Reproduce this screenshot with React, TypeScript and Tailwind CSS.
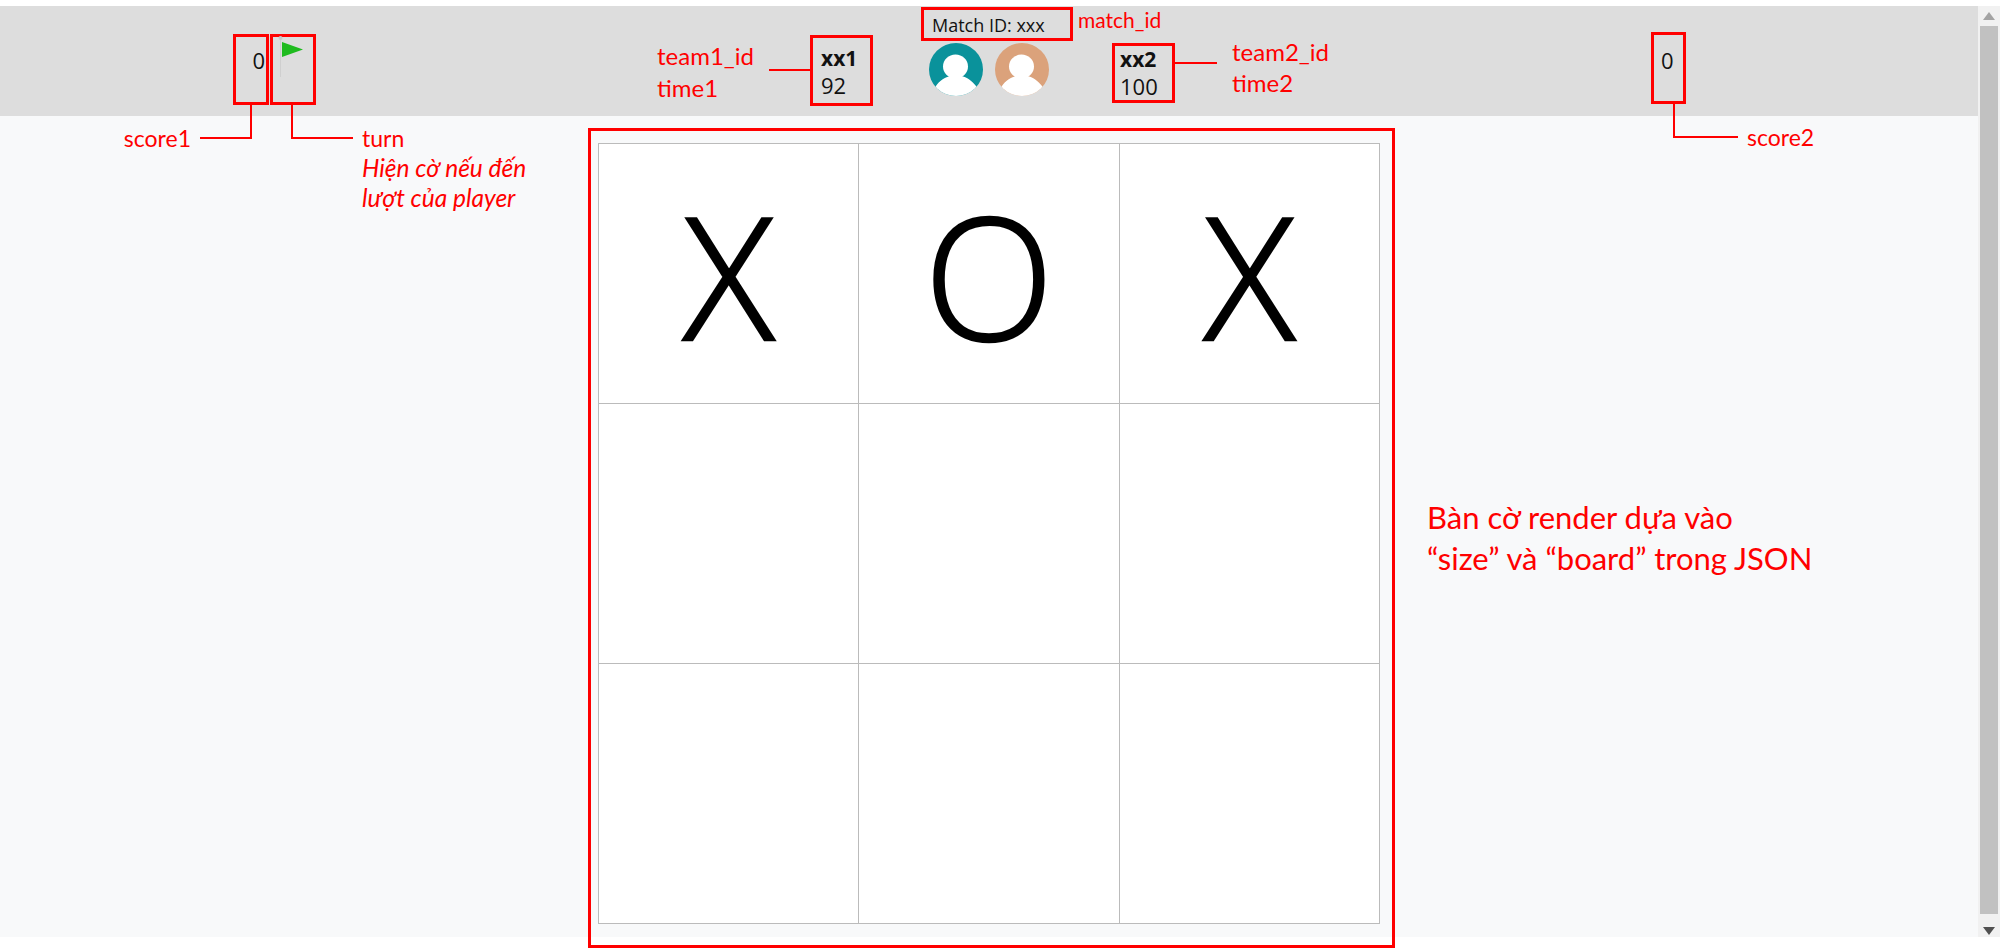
import React from "react";

const cells = ["X", "O", "X", "", "", "", "", "", ""];
const note = "font-['Lato','Open_Sans',sans-serif] text-[#ff0000] whitespace-nowrap";
const box = "border-[3px] border-[#ff0000] shrink-0";

function Avatar({ color, id }: { color: string; id: string }) {
  return (
    <svg viewBox="0 0 54 53" className="w-[54px] h-[53px] block">
      <defs>
        <clipPath id={id}>
          <ellipse cx="27" cy="26.5" rx="27" ry="26.5" />
        </clipPath>
      </defs>
      <ellipse cx="27" cy="26.5" rx="27" ry="26.5" fill={color} />
      <g clipPath={`url(#${id})`} fill="#fff">
        <ellipse cx="26.5" cy="23.5" rx="12.5" ry="12" />
        <path d="M7 43 C10 38 16 34 22 33 L32 33 C38 34 43 38 47 43 L54 53 L0 53 Z" />
      </g>
    </svg>
  );
}

export default function App() {
  return (
    <div className="relative w-full h-[948px] overflow-hidden bg-white pt-[6px] flex items-start font-['Open_Sans',sans-serif] text-[#111]">
      <main className="w-[1978px] h-[931px] bg-[#f8f9fa] shrink-0">
        <header className="h-[110px] bg-[#dddddd] flex items-start">
          {/* score 1 */}
          <div className={`relative ml-[233px] mt-[28px] w-[36px] h-[71px] pt-[8px] pr-[1px] text-right text-[22px] leading-[30px] ${box}`}>
            0
            <div className={`absolute top-[calc(100%+3px)] right-[14px] flex items-start text-[23px] leading-[30px] ${note}`}>
              <span className="mt-[18px] mr-[9px]">score1</span>
              <div className="w-[52px] h-[34px] border-r-2 border-b-2 border-[#ff0000]" />
            </div>
          </div>

          {/* turn */}
          <div className={`relative ml-[1px] mt-[28px] w-[46px] h-[71px] ${box}`}>
            <svg viewBox="0 0 28 44" className="ml-[4px] mt-[-2px] w-[28px] h-[44px]">
              <rect x="3" y="3" width="1" height="39" fill="#cfcfcf" />
              <circle cx="3.5" cy="3" r="2" fill="#c8c8c8" />
              <polygon points="5,7 26,14.5 5,22" fill="#1fbb1f" />
            </svg>
            <div className={`absolute top-[calc(100%+3px)] left-[18px] flex items-start text-[23px] leading-[30px] ${note}`}>
              <div className="w-[62px] h-[34px] border-l-2 border-b-2 border-[#ff0000]" />
              <div className="mt-[18px] ml-[9px]">
                <div>turn</div>
                <div className="italic text-[24.5px]">Hiện cờ nếu đến</div>
                <div className="italic text-[24.5px]">lượt của player</div>
              </div>
            </div>
          </div>

          {/* team 1 */}
          <div className="ml-[341px] mt-[29px] flex items-start">
            <div className={`w-[112px] mt-[5px] text-[24px] leading-[32px] ${note}`}>
              <div>team1_id</div>
              <div>time1</div>
            </div>
            <div className="w-[41px] h-[2px] mt-[34px] bg-[#ff0000]" />
            <div className={`w-[63px] h-[71px] pl-[8px] pt-[7px] text-[22px] leading-[27px] ${box}`}>
              <div className="font-bold text-[21px]">xx1</div>
              <div>92</div>
            </div>
          </div>

          {/* match */}
          <div className="ml-[48px] mt-[1px] w-[191px] shrink-0">
            <div className="flex items-start">
              <div className={`w-[152px] h-[34px] pl-[8px] pt-[3px] text-[18px] leading-[24px] whitespace-nowrap ${box}`}>Match ID: xxx</div>
              <div className={`ml-[5px] mt-[-1px] text-[21px] leading-[28px] ${note}`}>match_id</div>
            </div>
            <div className="flex gap-[12px] ml-[8px] mt-[2px]">
              <Avatar color="#0a929b" id="a1" />
              <Avatar color="#dba27b" id="a2" />
            </div>
          </div>

          {/* team 2 */}
          <div className="mt-[37px] flex items-start w-[220px] shrink-0">
            <div className={`w-[63px] h-[60px] pl-[5px] text-[22px] leading-[27px] ${box}`}>
              <div className="font-bold text-[21px]">xx2</div>
              <div>100</div>
            </div>
            <div className="w-[42px] h-[2px] mt-[19px] bg-[#ff0000]" />
            <div className={`ml-[15px] mt-[-7px] text-[24px] leading-[31px] ${note}`}>
              <div>team2_id</div>
              <div>time2</div>
            </div>
          </div>

          {/* score 2 */}
          <div className={`relative ml-[319px] mt-[26px] w-[35px] h-[72px] pt-[10px] pl-[7px] text-[22px] leading-[30px] ${box}`}>
            0
            <div className={`absolute top-[calc(100%+3px)] left-[19px] flex items-start text-[23px] leading-[30px] ${note}`}>
              <div className="w-[65px] h-[34px] border-l-2 border-b-2 border-[#ff0000]" />
              <span className="mt-[18px] ml-[9px]">score2</span>
            </div>
          </div>
        </header>

        <div className="flex items-start">
          <div className={`ml-[588px] mt-[12px] w-[807px] h-[820px] pl-[7px] pt-[12px] ${box}`}>
            <div className="w-[782px] grid grid-cols-3 border-t border-l border-[#bbbbbb] bg-white">
              {cells.map((c, i) => (
                <div key={i} className="h-[260px] border-r border-b border-[#bbbbbb] flex items-center justify-center text-[170px] font-light [-webkit-text-stroke:2.5px_#000] leading-none text-black">
                  {c}
                </div>
              ))}
            </div>
          </div>
          <div className={`ml-[32px] mt-[12px] self-center text-[31px] leading-[41px] ${note}`}>
            <div>Bàn cờ render dựa vào</div>
            <div>“size” và “board” trong JSON</div>
          </div>
        </div>
      </main>

      <aside className="w-[22px] h-[931px] bg-[#f1f1f1] flex flex-col items-center shrink-0">
        <svg viewBox="0 0 12 8" className="w-[12px] h-[8px] mt-[6px] mb-[6px]"><polygon points="6,0 12,8 0,8" fill="#a3a3a3" /></svg>
        <div className="w-[18px] flex-1 bg-[#c1c1c1]" />
        <svg viewBox="0 0 12 8" className="w-[12px] h-[8px] mt-[13px] mb-[2px]"><polygon points="0,0 12,0 6,8" fill="#505050" /></svg>
      </aside>
    </div>
  );
}
